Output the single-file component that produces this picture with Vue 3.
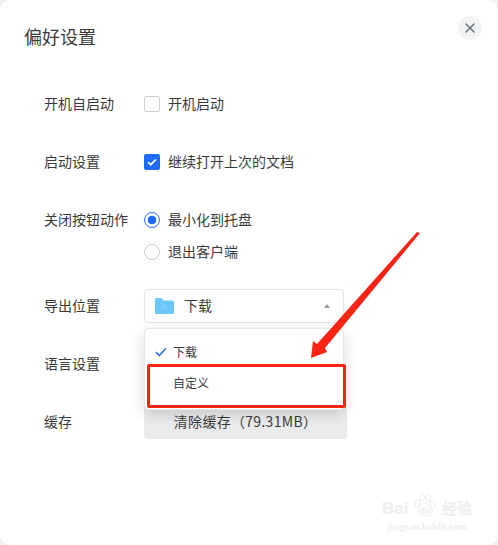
<template>
    <div class="dialog">
        <header class="dialog__header">
            <h1 class="dialog__title">偏好设置</h1>
            <button class="dialog__close" aria-label="关闭">
                <svg width="12" height="12" viewBox="0 0 12 12">
                    <path d="M2 2l8 8M10 2l-8 8" stroke="#6f7580" stroke-width="1.6" stroke-linecap="round" fill="none" />
                </svg>
            </button>
        </header>

        <div class="form">
            <div class="row">
                <div class="row__label">开机自启动</div>
                <label class="option">
                    <span class="checkbox"></span>
                    <span class="option__text">开机启动</span>
                </label>
            </div>

            <div class="row">
                <div class="row__label">启动设置</div>
                <label class="option">
                    <span class="checkbox checkbox--on">
                        <svg width="12" height="12" viewBox="0 0 12 12">
                            <path d="M2.2 6.2l2.6 2.5 5-5.2" stroke="#fff" stroke-width="1.7" fill="none" />
                        </svg>
                    </span>
                    <span class="option__text">继续打开上次的文档</span>
                </label>
            </div>

            <div class="row row--top">
                <div class="row__label">关闭按钮动作</div>
                <div class="radios">
                    <label class="option">
                        <span class="radio radio--on"></span>
                        <span class="option__text">最小化到托盘</span>
                    </label>
                    <label class="option">
                        <span class="radio"></span>
                        <span class="option__text">退出客户端</span>
                    </label>
                </div>
            </div>

            <div class="row">
                <div class="row__label">导出位置</div>
                <div class="select-wrap">
                    <div class="select">
                        <svg class="select__folder" width="19" height="16" viewBox="0 0 19 16">
                            <path d="M0 1.500A1.500 1.500 0 0 1 1.500 0h5L8.500 2.500h9A1.500 1.500 0 0 1 19 4v10.500a1.500 1.500 0 0 1-1.500 1.500h-16A1.500 1.500 0 0 1 0 14.500z" fill="#6cc7fa" />
                            <path d="M6.500 11.500l3-5 3 5" stroke="#8ed6fc" stroke-width="1" fill="none" />
                        </svg>
                        <span class="option__text">下载</span>
                        <span class="select__caret"></span>
                    </div>
                    <ul class="dropdown">
                        <li v-for="item in folders" :key="item.name" class="dropdown__item">
                            <svg v-if="item.active" class="dropdown__check" width="12" height="10" viewBox="0 0 12 10">
                                <path d="M1 5.200l3.400 3.400L11 1.200" stroke="#2f74f0" stroke-width="1.700" fill="none" />
                            </svg>
                            <span>{{ item.name }}</span>
                        </li>
                    </ul>
                </div>
            </div>

            <div class="row">
                <div class="row__label">语言设置</div>
            </div>

            <div class="row">
                <div class="row__label">缓存</div>
                <button class="clear-btn">清除缓存（79.31MB）</button>
            </div>
        </div>

        <!-- screenshot annotation -->
        <div class="mark"></div>
        <svg class="arrow" width="498" height="545" viewBox="0 0 498 545">
            <polygon points="417,232 420,233 325,348 327,352 311,358 313,341 317,344" fill="#fb2314" />
        </svg>

        <div class="watermark">
            <div class="watermark__logo">
                <span>Bai</span>
                <span class="watermark__paw">
                    <svg width="22" height="26" viewBox="0 0 22 26">
                        <g fill="none" stroke="#eeeeee" stroke-width="1">
                            <ellipse cx="3.500" cy="11" rx="2.500" ry="3.500" />
                            <ellipse cx="8" cy="4.500" rx="2.500" ry="3.500" />
                            <ellipse cx="14" cy="4.500" rx="2.500" ry="3.500" />
                            <ellipse cx="18.500" cy="11" rx="2.500" ry="3.500" />
                            <path d="M11 10c-3 0-4 3-6 5-2 2-2 8 2 8 1.500 0 2.500-.5 4-.5s2.500.5 4 .5c4 0 4-6 2-8-2-2-3-5-6-5z" />
                        </g>
                    </svg>
                    <span class="watermark__du">du</span>
                </span>
                <span class="watermark__cn">经验</span>
            </div>
            <div class="watermark__url">jingyan.baidu.com</div>
        </div>
    </div>
</template>

<script setup>
const folders = [
    { name: '下载', active: true },
    { name: '自定义', active: false }
]
</script>

<style scoped>
.dialog {
    position: relative;
    width: 498px;
    height: 545px;
    box-sizing: border-box;
    padding: 24px 24px 0;
    background: #fff;
    border-radius: 10px;
    overflow: hidden;
    color: #3a3a3a;
    font-family: "Noto Sans CJK SC", "Liberation Sans", sans-serif;
    font-size: 14px;
}

.dialog__header {
    display: flex;
    align-items: flex-start;
    justify-content: space-between;
    height: 63px;
}

.dialog__title {
    margin: 0;
    font-size: 18px;
    font-weight: 400;
    line-height: 24px;
}

.dialog__close {
    display: flex;
    align-items: center;
    justify-content: center;
    width: 24px;
    height: 24px;
    margin: -8px -8px 0 0;
    padding: 0;
    border: none;
    border-radius: 50%;
    background: #f2f3f5;
}

.form {
    display: flex;
    flex-direction: column;
    gap: 24px;
    padding-left: 20px;
}

.row {
    display: flex;
    align-items: center;
    min-height: 34px;
}

.row--top {
    align-items: flex-start;
}

.row__label {
    flex: none;
    width: 100px;
    height: 34px;
    line-height: 32px;
}

.option {
    display: flex;
    align-items: center;
    gap: 8px;
    height: 20px;
}

.option__text {
    line-height: 18px;
    padding-bottom: 2px;
}

.checkbox {
    box-sizing: border-box;
    display: flex;
    align-items: center;
    justify-content: center;
    width: 16px;
    height: 16px;
    border: 1px solid #ccc;
    border-radius: 2px;
    background: #fff;
}

.checkbox--on {
    border-color: #1e6cff;
    background: #1e6cff;
}

.radios {
    display: flex;
    flex-direction: column;
    gap: 12px;
    padding: 7px 0 3px;
}

.radio {
    box-sizing: border-box;
    width: 16px;
    height: 16px;
    border: 1px solid #ccc;
    border-radius: 50%;
    background: #fff;
}

.radio--on {
    border-color: #2f74f0;
    background: radial-gradient(circle, #1e6cff 0 4px, #fff 4.600px);
}

.select-wrap {
    position: relative;
    width: 200px;
}

.select {
    box-sizing: border-box;
    display: flex;
    align-items: center;
    height: 34px;
    padding: 0 13px 0 10px;
    border: 1px solid #e3e3e3;
    border-radius: 4px;
    background: #fff;
}

.select__folder {
    margin-right: 10px;
}

.select__caret {
    width: 0;
    height: 0;
    margin-left: auto;
    border-left: 3.500px solid transparent;
    border-right: 3.500px solid transparent;
    border-bottom: 4px solid #999;
}

.dropdown {
    position: absolute;
    top: 39px;
    left: 0;
    z-index: 2;
    box-sizing: border-box;
    width: 200px;
    height: 82px;
    margin: 0;
    padding: 7px 0 0;
    list-style: none;
    border: 1px solid #e6e6e6;
    border-radius: 4px;
    background: #fff;
    box-shadow: 0 4px 14px rgba(0, 0, 0, 0.14);
    font-size: 12px;
}

.dropdown__item {
    position: relative;
    height: 31px;
    padding-left: 28px;
    line-height: 31px;
}

.dropdown__check {
    position: absolute;
    top: 11px;
    left: 10px;
}

.clear-btn {
    width: 203px;
    height: 34px;
    padding: 0 0 2px;
    border: none;
    border-radius: 4px;
    background: #e9eaec;
    color: #3a3a3a;
    font: inherit;
    letter-spacing: 0.3px;
}

.mark {
    position: absolute;
    top: 364px;
    left: 147px;
    z-index: 3;
    box-sizing: border-box;
    width: 199px;
    height: 44px;
    border: 3px solid #fb2314;
    border-radius: 2px;
}

.arrow {
    position: absolute;
    top: 0;
    left: 0;
    z-index: 3;
    pointer-events: none;
}

.watermark {
    position: absolute;
    top: 491px;
    left: 382px;
    width: 90px;
    color: #eeeeee;
    font-family: "Liberation Sans", "Noto Sans CJK SC", sans-serif;
    text-align: center;
}

.watermark__logo {
    display: flex;
    align-items: flex-end;
    justify-content: space-between;
    height: 28px;
    font-size: 17px;
    line-height: 20px;
    font-weight: 700;
}

.watermark__paw {
    position: relative;
    display: block;
    height: 26px;
}

.watermark__du {
    position: absolute;
    left: 5px;
    bottom: 3px;
    font-size: 9px;
    line-height: 10px;
}

.watermark__cn {
    font-size: 15px;
}

.watermark__url {
    margin-top: 2px;
    font-size: 10px;
    line-height: 12px;
    font-family: "Liberation Serif", serif;
    font-weight: 700;
}
</style>

<style>
html,
body {
    margin: 0;
    background: #f0f0f0;
}
</style>
